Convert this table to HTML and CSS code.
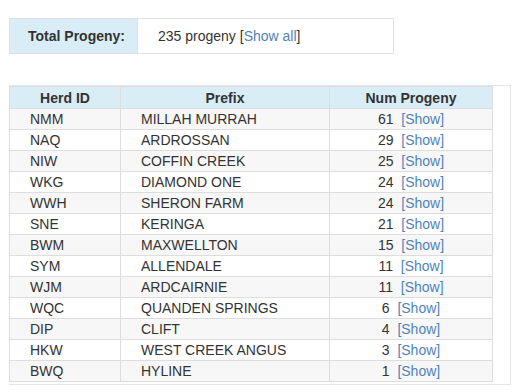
FILE: index.html
```html
<!DOCTYPE html>
<html>
<head>
<meta charset="utf-8">
<link rel="stylesheet" href="styles.css">
</head>
<body>
<div class="page">
  <table class="summary">
    <tr>
      <th class="summary-label">Total Progeny:</th>
      <td class="summary-value">235 progeny [<a href="#">Show all</a>]</td>
    </tr>
  </table>
  <div class="table-wrap">
    <table class="progeny">
      <thead>
        <tr><th class="c-id">Herd ID</th><th class="c-prefix">Prefix</th><th class="c-num">Num Progeny</th></tr>
      </thead>
      <tbody>
        <tr><td>NMM</td><td>MILLAH MURRAH</td><td class="num">61&nbsp; <a href="#">[Show]</a></td></tr>
        <tr><td>NAQ</td><td>ARDROSSAN</td><td class="num">29&nbsp; <a href="#">[Show]</a></td></tr>
        <tr><td>NIW</td><td>COFFIN CREEK</td><td class="num">25&nbsp; <a href="#">[Show]</a></td></tr>
        <tr><td>WKG</td><td>DIAMOND ONE</td><td class="num">24&nbsp; <a href="#">[Show]</a></td></tr>
        <tr><td>WWH</td><td>SHERON FARM</td><td class="num">24&nbsp; <a href="#">[Show]</a></td></tr>
        <tr><td>SNE</td><td>KERINGA</td><td class="num">21&nbsp; <a href="#">[Show]</a></td></tr>
        <tr><td>BWM</td><td>MAXWELLTON</td><td class="num">15&nbsp; <a href="#">[Show]</a></td></tr>
        <tr><td>SYM</td><td>ALLENDALE</td><td class="num">11&nbsp; <a href="#">[Show]</a></td></tr>
        <tr><td>WJM</td><td>ARDCAIRNIE</td><td class="num">11&nbsp; <a href="#">[Show]</a></td></tr>
        <tr><td>WQC</td><td>QUANDEN SPRINGS</td><td class="num">6&nbsp; <a href="#">[Show]</a></td></tr>
        <tr><td>DIP</td><td>CLIFT</td><td class="num">4&nbsp; <a href="#">[Show]</a></td></tr>
        <tr><td>HKW</td><td>WEST CREEK ANGUS</td><td class="num">3&nbsp; <a href="#">[Show]</a></td></tr>
        <tr><td>BWQ</td><td>HYLINE</td><td class="num">1&nbsp; <a href="#">[Show]</a></td></tr>
      </tbody>
    </table>
  </div>
</div>
</body>
</html>
```
FILE: styles.css
```css
html, body {
  margin: 0;
  padding: 0;
  background: #fff;
}
body {
  font-family: "Liberation Sans", Arial, sans-serif;
  font-size: 14px;
  color: #333;
}
a {
  color: #4f83bb;
  text-decoration: none;
}
.page {
  padding: 18px 0 0 9px;
}
.summary {
  border-collapse: collapse;
  width: 385px;
}
.summary th, .summary td {
  border: 1px solid #e0e0e0;
  height: 34px;
  padding: 0;
  line-height: 20px;
}
.summary-label {
  background: #d9edf7;
  width: 128px;
  text-align: left;
  padding-left: 18px !important;
  box-sizing: border-box;
  font-weight: bold;
  color: #333;
}
.summary-value {
  padding-left: 20px !important;
}
.table-wrap {
  margin-top: 31px;
  width: 501px;
  height: 298px;
  border: 1px solid #e6e6e6;
  border-left: none;
}
.progeny {
  border-collapse: collapse;
  width: 484px;
  table-layout: fixed;
}
.progeny th, .progeny td {
  border: 1px solid #dddddd;
  padding: 0;
  height: 20px;
  line-height: 20px;
}
.progeny th {
  background: #d9edf7;
  font-weight: bold;
  text-align: center;
  height: 21px;
}
.progeny td {
  padding-left: 20px;
}
.progeny td.num {
  padding-left: 0;
  text-align: center;
}
.c-id { width: 110px; }
.c-prefix { width: 208px; }
.progeny tbody tr:nth-child(odd) td {
  background: #f7f7f7;
}
```
